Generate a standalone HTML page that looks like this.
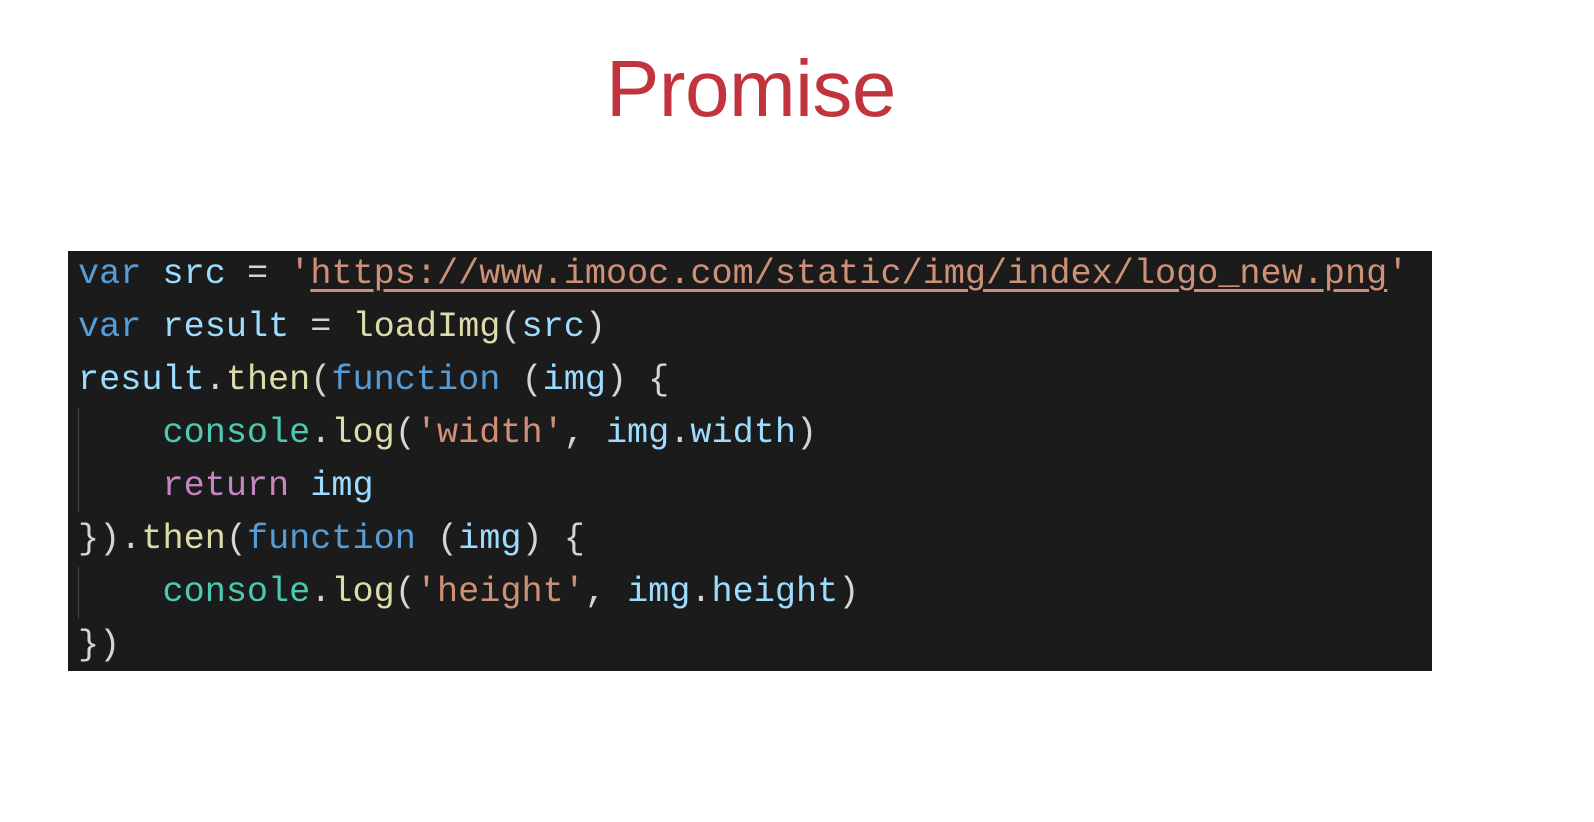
<!DOCTYPE html>
<html><head><meta charset="utf-8"><style>
body{margin:0;width:1594px;height:822px;background:#fff;position:relative;overflow:hidden}
h1{position:absolute;left:606px;top:43px;margin:0;font:400 80px "Liberation Sans",sans-serif;color:#c1343e;letter-spacing:-0.5px}
.box{position:absolute;left:68px;top:251px;width:1364px;height:420px;background:#1b1b1b}
pre{position:absolute;left:78px;top:248px;margin:0;font:35.2px/53px "Liberation Mono",monospace;color:#d4d4d4}
.k{color:#569cd6}.v{color:#9cdcfe}.f{color:#dcdcaa}.s{color:#ce9178}.c{color:#4ec9b0}.r{color:#c586c0}
.u{text-decoration:underline;text-underline-offset:6px}
.g{position:absolute;left:78px;width:1px;background:#444}
</style></head><body>
<h1>Promise</h1>
<div class="box"></div>
<div class="g" style="top:408px;height:104px"></div>
<div class="g" style="top:567px;height:52px"></div>
<pre><span class="k">var</span> <span class="v">src</span> = <span class="s">'<span class="u">https://www.imooc.com/static/img/index/logo_new.png</span>'</span>
<span class="k">var</span> <span class="v">result</span> = <span class="f">loadImg</span>(<span class="v">src</span>)
<span class="v">result</span>.<span class="f">then</span>(<span class="k">function</span> (<span class="v">img</span>) {
    <span class="c">console</span>.<span class="f">log</span>(<span class="s">'width'</span>, <span class="v">img</span>.<span class="v">width</span>)
    <span class="r">return</span> <span class="v">img</span>
}).<span class="f">then</span>(<span class="k">function</span> (<span class="v">img</span>) {
    <span class="c">console</span>.<span class="f">log</span>(<span class="s">'height'</span>, <span class="v">img</span>.<span class="v">height</span>)
})</pre>
</body></html>
